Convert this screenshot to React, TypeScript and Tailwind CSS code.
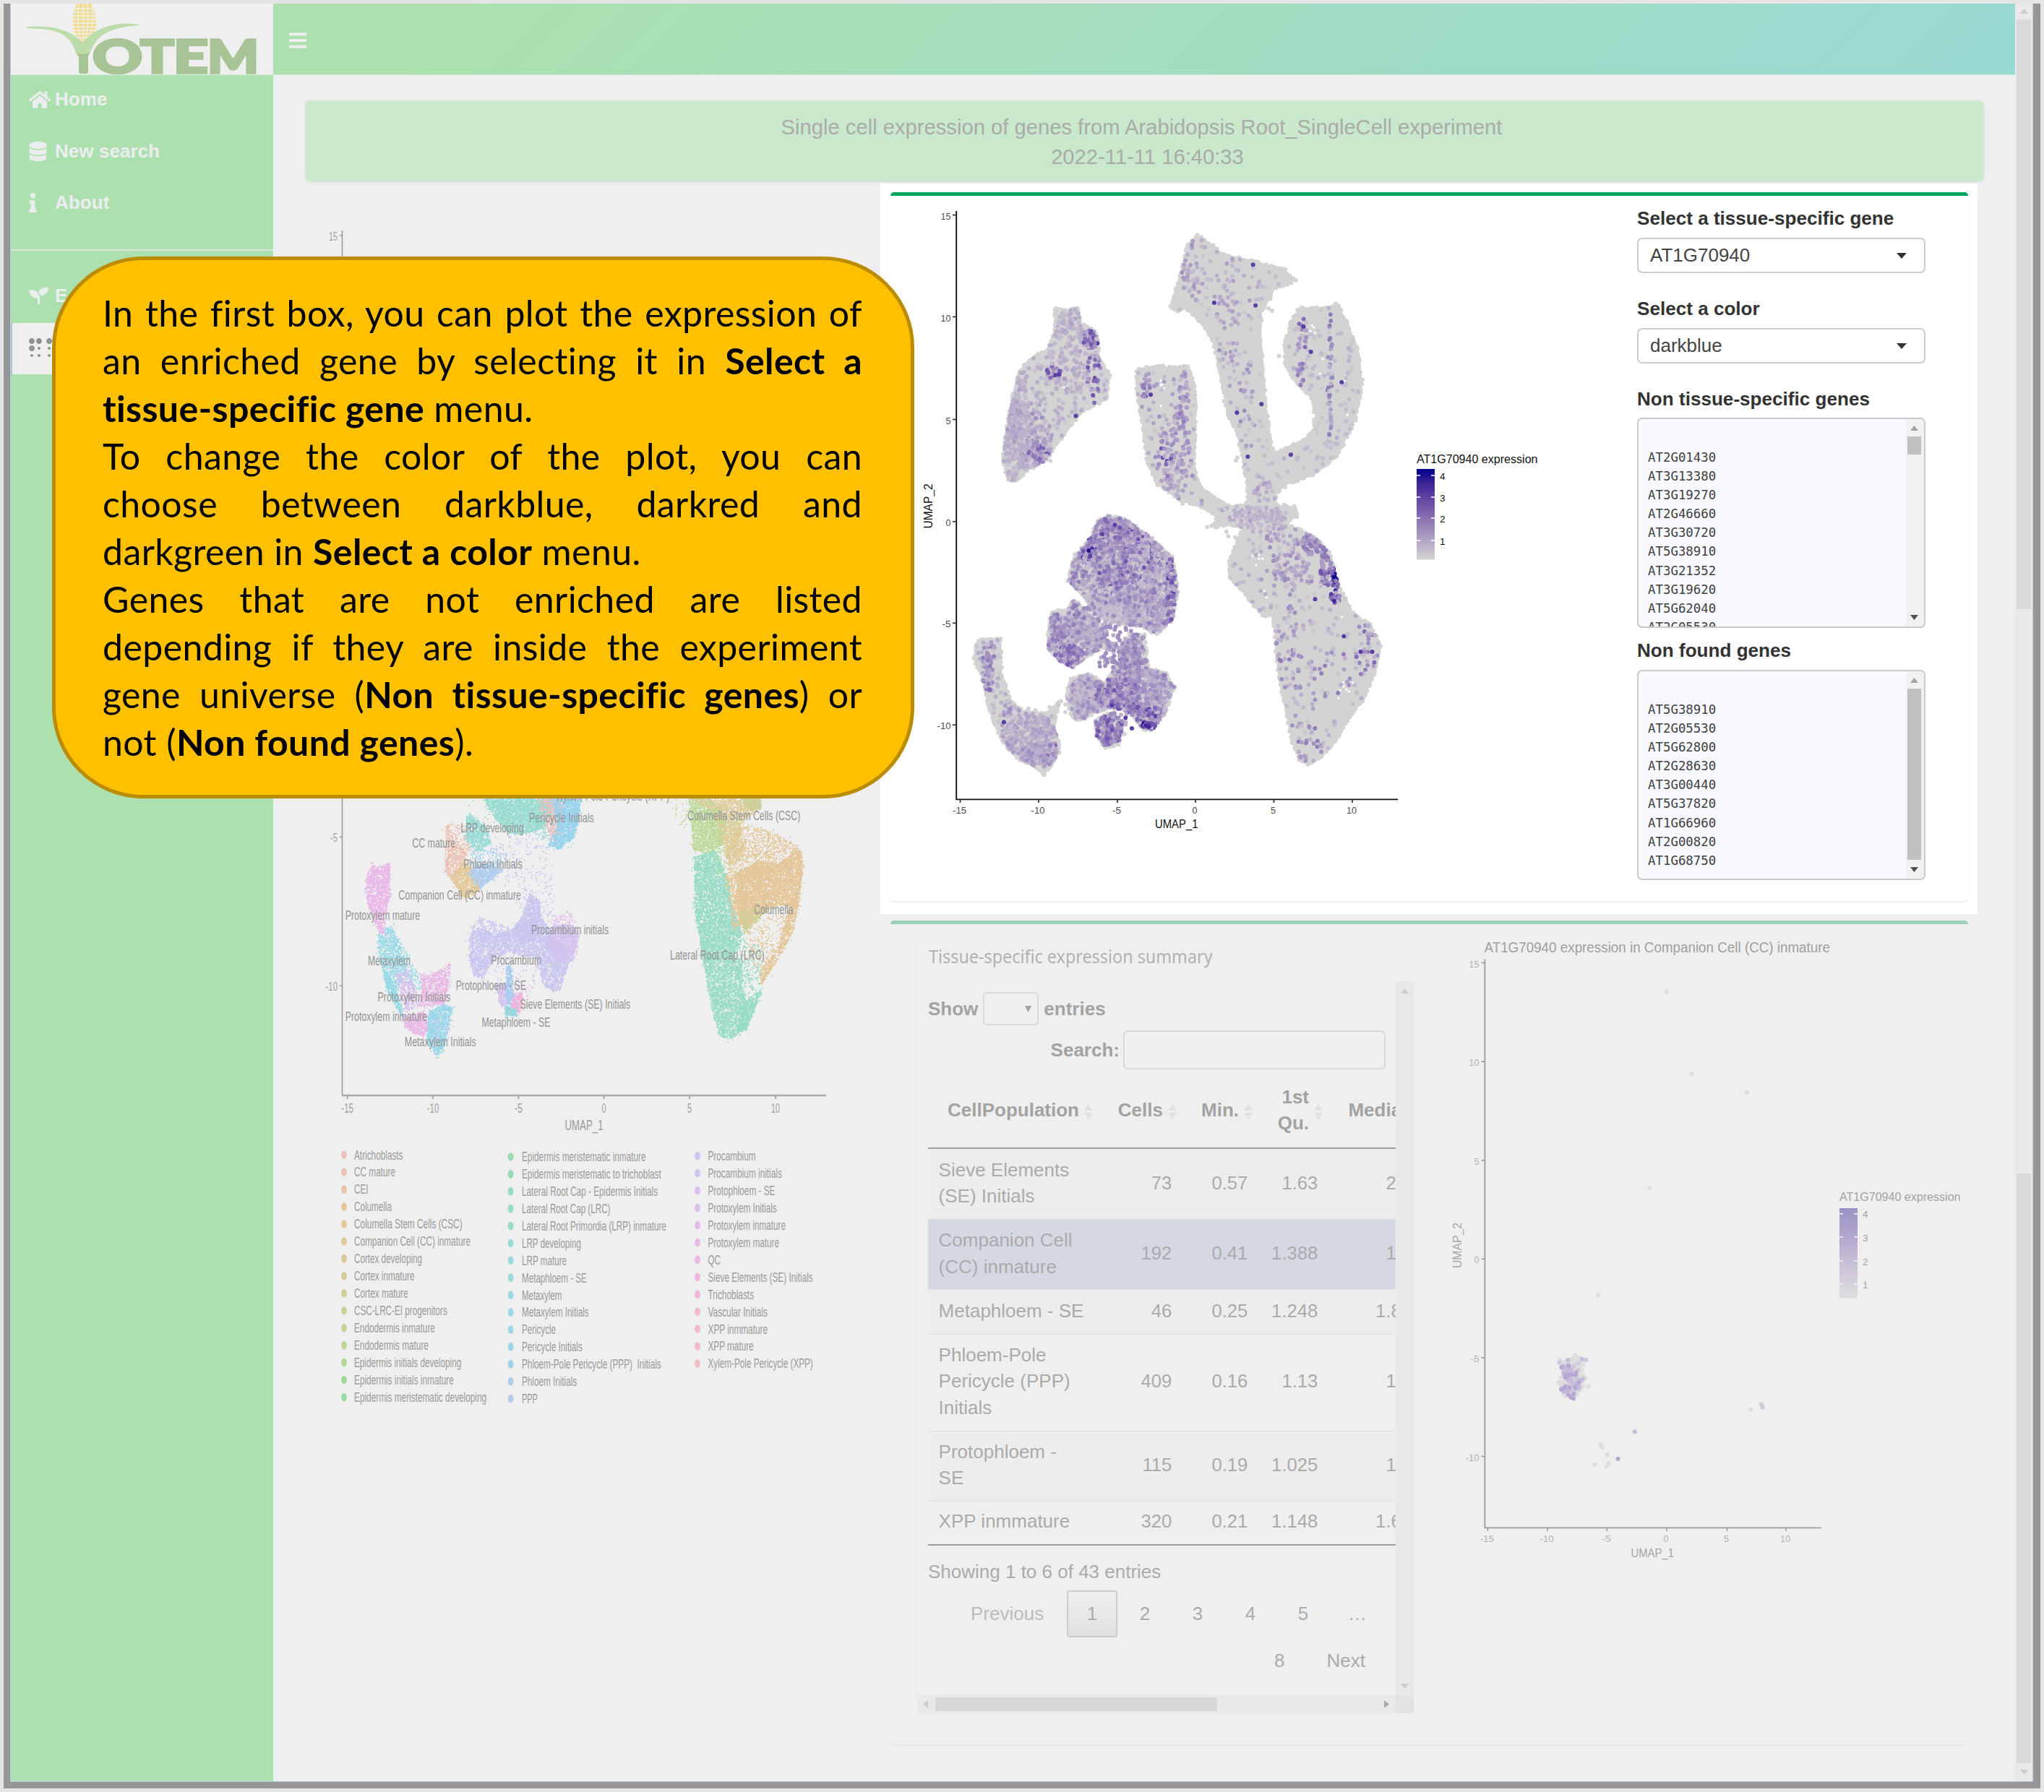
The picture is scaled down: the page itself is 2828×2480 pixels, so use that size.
import React from "react";
import { FaHome, FaDatabase, FaInfo, FaSeedling, FaBraille, FaBars } from "react-icons/fa";

type Pt = [number, number];

/* ---------- deterministic scatter helpers ---------- */

function rng(seed: number) {
  let s = seed >>> 0;
  return () => {
    s = (s + 0x6d2b79f5) >>> 0;
    let t = s;
    t = Math.imul(t ^ (t >>> 15), t | 1);
    t ^= t + Math.imul(t ^ (t >>> 7), t | 61);
    return ((t ^ (t >>> 14)) >>> 0) / 4294967296;
  };
}

function inside(p: Pt, poly: Pt[]) {
  let c = false;
  for (let i = 0, j = poly.length - 1; i < poly.length; j = i++) {
    const [xi, yi] = poly[i];
    const [xj, yj] = poly[j];
    if (yi > p[1] !== yj > p[1] && p[0] < ((xj - xi) * (p[1] - yi)) / (yj - yi) + xi) c = !c;
  }
  return c;
}

function samples(poly: Pt[], n: number, r: () => number): Pt[] {
  const xs = poly.map((p) => p[0]);
  const ys = poly.map((p) => p[1]);
  const x0 = Math.min(...xs), x1 = Math.max(...xs), y0 = Math.min(...ys), y1 = Math.max(...ys);
  const out: Pt[] = [];
  let guard = 0;
  while (out.length < n && guard++ < n * 30) {
    const p: Pt = [x0 + r() * (x1 - x0), y0 + r() * (y1 - y0)];
    if (inside(p, poly)) out.push(p);
  }
  return out;
}

const dots = (pts: Pt[]) => pts.map((p) => `M${p[0].toFixed(1)} ${p[1].toFixed(1)}h0`).join("");
const outline = (poly: Pt[]) => "M" + poly.map((p) => `${p[0].toFixed(1)} ${p[1].toFixed(1)}`).join("L") + "Z";

function edge(poly: Pt[], r: () => number): Pt[] {
  const out: Pt[] = [];
  poly.forEach((a, i) => {
    const b = poly[(i + 1) % poly.length];
    const n = Math.max(1, Math.round(Math.hypot(b[0] - a[0], b[1] - a[1]) / 3.4));
    for (let k = 0; k < n; k++) {
      const t = k / n;
      out.push([a[0] + (b[0] - a[0]) * t + (r() - 0.5) * 3, a[1] + (b[1] - a[1]) * t + (r() - 0.5) * 3]);
    }
  });
  return out;
}

/* ---------- expression plot data ---------- */

const up = (pts: Pt[]): Pt[] => pts.map(([x, y]) => [1200 + x / 2.063, 240 + y / 3]);
const low = (pts: Pt[]): Pt[] => pts.map(([x, y]) => [1200 + x / 2.063, 700 + y / 2.8]);

/* hot spot: centre x, centre y, radius x, radius y, dot count, expression level */
type Hot = [number, number, number, number, number, number];
type Blob = { poly: Pt[]; n: number; level: number; hot: Hot[] };

const blobs: Blob[] = [
  {
    poly: up([[538, 560], [570, 570], [600, 560], [608, 620], [655, 665], [660, 760], [692, 840], [680, 935], [610, 990], [555, 1090], [510, 1190], [465, 1225], [420, 1278], [405, 1270], [387, 1200], [400, 1050], [420, 900], [435, 820], [480, 755], [515, 735], [535, 670]]),
    n: 240, level: 0.14,
    hot: [[1395, 540, 22, 110, 430, 0.2], [1422, 600, 28, 40, 100, 0.28], [1405, 620, 24, 60, 130, 0.2], [1509, 468, 10, 12, 60, 0.52], [1513, 520, 8, 40, 24, 0.5], [1456, 515, 9, 7, 20, 0.55], [1438, 628, 13, 10, 60, 0.5], [1410, 620, 40, 50, 200, 0.22], [1480, 485, 25, 50, 150, 0.2]],
  },
  {
    poly: up([[770, 815], [830, 800], [880, 808], [915, 800], [930, 860], [937, 950], [930, 1220], [950, 1300], [1010, 1370], [1060, 1395], [1110, 1420], [1100, 1450], [1010, 1410], [960, 1385], [890, 1350], [830, 1290], [800, 1200], [790, 1070], [770, 900]]),
    n: 80, level: 0.2,
    hot: [[1586, 535, 7, 14, 16, 0.45], [1637, 560, 6, 40, 45, 0.36], [1622, 620, 20, 30, 50, 0.3], [1625, 665, 15, 25, 50, 0.28], [1614, 625, 8, 30, 10, 0.58]],
  },
  {
    poly: up([[940, 258], [975, 290], [1020, 340], [1100, 365], [1190, 400], [1220, 445], [1160, 480], [1140, 530], [1122, 580], [1122, 700], [1135, 950], [1150, 1120], [1160, 1165], [1200, 1140], [1240, 1115], [1275, 1070], [1280, 1000], [1270, 930], [1220, 860], [1195, 790], [1190, 720], [1215, 600], [1235, 560], [1300, 560], [1340, 545], [1375, 640], [1400, 740], [1412, 880], [1390, 1030], [1340, 1170], [1270, 1250], [1200, 1285], [1165, 1330], [1165, 1375], [1225, 1412], [1200, 1450], [1050, 1450], [1060, 1400], [1090, 1360], [1085, 1280], [1070, 1170], [1060, 1090], [1030, 1000], [1010, 830], [985, 680], [940, 600], [905, 550], [885, 575], [867, 550], [885, 470], [900, 400], [915, 300]]),
    n: 230, level: 0.1,
    hot: [[1650, 360, 14, 55, 50, 0.28], [1700, 380, 40, 50, 34, 0.26], [1702, 470, 14, 60, 28, 0.3], [1728, 560, 12, 60, 20, 0.3], [1801, 490, 7, 45, 30, 0.4], [1840, 510, 3, 80, 36, 0.38], [1745, 700, 16, 40, 40, 0.23]],
  },
  {
    poly: low([[955, 0], [1220, 5], [1225, 40], [1170, 60], [1190, 72], [1275, 118], [1320, 190], [1345, 310], [1380, 410], [1440, 470], [1463, 540], [1445, 650], [1420, 740], [1370, 830], [1330, 920], [1295, 975], [1255, 1000], [1235, 980], [1215, 920], [1200, 820], [1180, 690], [1168, 560], [1160, 415], [1130, 428], [1080, 340], [1035, 280], [1035, 210], [1060, 130], [1075, 90], [1040, 70], [985, 80], [1000, 45]]),
    n: 190, level: 0.13,
    hot: [[1740, 715, 35, 15, 80, 0.18], [1785, 755, 28, 38, 90, 0.3], [1822, 752, 16, 14, 80, 0.4], [1838, 780, 10, 26, 100, 0.48], [1848, 800, 4, 15, 40, 0.86], [1847, 826, 6, 7, 14, 0.62], [1790, 800, 40, 14, 30, 0.3], [1815, 930, 60, 30, 30, 0.38], [1890, 905, 14, 45, 28, 0.44], [1812, 1030, 14, 30, 22, 0.4], [1780, 890, 12, 60, 26, 0.32], [1800, 960, 20, 50, 14, 0.38]],
  },
  {
    poly: low([[690, 38], [740, 55], [800, 115], [870, 200], [885, 330], [870, 440], [825, 495], [790, 470], [760, 460], [700, 450], [660, 430], [610, 340], [575, 290], [590, 200], [640, 120], [660, 60]]),
    n: 1100, level: 0.25,
    hot: [[1530, 745, 40, 28, 320, 0.42], [1515, 752, 12, 12, 36, 0.66], [1500, 766, 8, 10, 20, 0.6], [1546, 796, 26, 16, 180, 0.46], [1580, 760, 22, 30, 50, 0.55], [1620, 815, 6, 40, 80, 0.54], [1555, 820, 40, 14, 90, 0.36], [1540, 735, 18, 16, 40, 0.58], [1525, 838, 24, 22, 220, 0.1], [1570, 790, 50, 45, 180, 0.12], [1590, 850, 30, 25, 160, 0.22]],
  },
  {
    poly: low([[525, 415], [575, 400], [590, 365], [640, 430], [670, 480], [680, 540], [620, 590], [585, 625], [550, 600], [515, 550]]),
    n: 340, level: 0.26,
    hot: [[1480, 908, 18, 12, 90, 0.46], [1463, 885, 10, 22, 60, 0.38], [1505, 870, 20, 22, 80, 0.26]],
  },
  {
    poly: low([[580, 670], [630, 655], [680, 690], [720, 600], [750, 500], [790, 500], [800, 630], [850, 650], [875, 700], [850, 800], [815, 865], [790, 865], [750, 800], [700, 780], [650, 800], [610, 830], [585, 820], [570, 740]]),
    n: 600, level: 0.24,
    hot: [[1560, 935, 14, 45, 200, 0.42], [1545, 962, 26, 20, 130, 0.46], [1572, 900, 6, 30, 60, 0.36], [1586, 990, 22, 14, 130, 0.54], [1590, 955, 22, 26, 130, 0.32], [1588, 1004, 10, 5, 24, 0.66], [1545, 978, 8, 5, 16, 0.66], [1497, 965, 14, 25, 100, 0.2]],
  },
  {
    poly: low([[650, 830], [700, 800], [730, 850], [715, 925], [680, 935], [655, 890]]),
    n: 90, level: 0.36,
    hot: [[1540, 1020, 14, 14, 40, 0.48]],
  },
  {
    poly: low([[325, 520], [345, 522], [378, 515], [382, 650], [410, 760], [450, 800], [490, 805], [520, 800], [550, 755], [530, 850], [548, 920], [545, 960], [505, 1040], [480, 1010], [430, 980], [385, 910], [350, 790], [335, 690], [305, 590], [312, 540]]),
    n: 90, level: 0.13,
    hot: [[1364, 900, 10, 20, 34, 0.34], [1367, 930, 7, 20, 26, 0.34], [1370, 952, 6, 6, 12, 0.5], [1425, 1020, 32, 28, 240, 0.24], [1440, 1045, 24, 14, 120, 0.28], [1456, 1045, 7, 14, 24, 0.46], [1392, 1020, 8, 20, 16, 0.46], [1405, 980, 16, 16, 30, 0.28]],
  },
];

const purples = ["#cbc7d1", "#c3bccf", "#b9afca", "#ad9fc6", "#a08fc1", "#927dbb", "#826ab4", "#7055ad", "#5b3ea5", "#43289c", "#271294", "#10048d"];

type Layer = { color: string; pts: Pt[] };

function expressionLayers(): { outlines: string[]; edges: string; layers: Layer[] } {
  const r = rng(11);
  const chunks: Layer[] = [];
  const edges: Pt[] = [];
  for (const b of blobs) {
    edges.push(...edge(b.poly, r));
    const all: { p: Pt; v: number }[] = [];
    samples(b.poly, b.n, r).forEach((p) => all.push({ p, v: b.level * (0.3 + r() * 1.5) }));
    for (const [cx, cy, rx, ry, n, lv] of b.hot) {
      for (let i = 0; i < n; i++) {
        const a = r() * Math.PI * 2;
        const d = Math.sqrt(r()) * 1.2;
        const p: Pt = [cx + Math.cos(a) * rx * d, cy + Math.sin(a) * ry * d];
        if (inside(p, b.poly)) all.push({ p, v: lv * (0.55 + r() * 0.75) });
      }
    }
    /* shuffled passes keep light and dark dots interleaved */
    for (let pass = 0; pass < 6; pass++) {
      const groups: Pt[][] = purples.map(() => []);
      all.forEach((d, i) => {
        if ((i * 7 + 3) % 6 === pass) groups[Math.max(0, Math.min(11, Math.floor(d.v * 12)))].push(d.p);
      });
      groups.forEach((g, i) => g.length && chunks.push({ color: purples[i], pts: g }));
    }
  }
  return { outlines: blobs.map((b) => outline(b.poly)), edges: dots(edges), layers: chunks };
}

const expr = expressionLayers();

const strays: Pt[] = (() => {
  const r = rng(77);
  return [
    ...samples(low([[680, 470], [760, 450], [760, 560], [700, 640], [650, 620], [670, 560]]), 90, r),
    ...samples(low([[590, 370], [640, 370], [700, 470], [680, 500]]), 24, r),
    ...samples(low([[690, 800], [740, 800], [740, 860], [710, 860]]), 12, r),
  ];
})();

const greyStrays: Pt[] = [
  ...low([[545, 765], [565, 770], [565, 800], [520, 780], [480, 792], [460, 785], [735, 885], [1025, 100], [1030, 118], [1050, 122], [970, 82], [1000, 60], [1215, 30], [1220, 15]]),
  ...up([[1175, 758], [1155, 570], [1145, 560], [1150, 520], [1018, 945], [1052, 1192], [1056, 1180], [1275, 990], [523, 1193], [990, 1345], [992, 1380], [900, 1372], [1215, 1408], [1190, 1375], [1180, 1390], [1085, 1320]]),
];

/* single strongly expressed cells */
const strong: Pt[] = [
  ...low([[390, 838], [755, 862], [737, 822], [1278, 362], [1441, 566], [1408, 566], [1360, 505]]),
  ...up([[1055, 993], [1125, 958], [1086, 1176], [1209, 1168], [1245, 636], [1266, 741], [1354, 867], [595, 1007], [809, 919], [1108, 548], [990, 537], [1101, 379]]),
];

/* small gaps in the dense clouds */
const gaps: Pt[] = [
  ...up([[1270, 632], [1275, 640], [1265, 655], [1278, 662], [838, 860], [842, 875], [846, 893], [838, 880], [838, 965], [560, 880], [563, 890], [555, 885], [1300, 770], [1292, 830], [1370, 1003], [1362, 860]]),
  ...low([[1103, 170], [1100, 195], [1118, 190], [1118, 205], [1110, 230], [1128, 205], [1262, 152], [1285, 165], [1358, 685], [1350, 715], [1368, 712], [1345, 745], [1386, 685], [1375, 720], [1360, 700], [400, 880], [405, 890], [412, 900], [1140, 355], [1133, 330], [1355, 430]]),
];

/* ---------- cell type plot data ---------- */

const cm = (pts: Pt[]): Pt[] => pts.map(([x, y]) => [440 + x / 2.119, 1080 + y / 3]);

const cellClouds: [string, number, Pt[]][] = [
  ["#98dcd0", 4200, [[485, 75], [690, 75], [680, 150], [660, 200], [600, 222], [560, 220], [520, 160]]],
  ["#98dcd0", 300, [[600, 100], [700, 100], [690, 240], [640, 240]]],
  ["#eebfc4", 1000, [[645, 75], [720, 75], [715, 150], [700, 270], [665, 190]]],
  ["#98d3ee", 2600, [[690, 75], [770, 75], [765, 160], [750, 240], [705, 285], [675, 270], [700, 190]]],
  ["#98dbd5", 1100, [[435, 150], [445, 140], [490, 190], [510, 260], [470, 300], [430, 250]]],
  ["#98dbd5", 60, [[440, 80], [480, 100], [560, 330], [440, 330]]],
  ["#ecc1b4", 900, [[374, 190], [385, 180], [400, 260], [440, 300], [400, 430], [372, 380]]],
  ["#ecc1b4", 160, [[385, 180], [430, 190], [450, 300], [410, 290]]],
  ["#e4c998", 1300, [[390, 400], [430, 330], [470, 400], [475, 450], [440, 490], [418, 480]]],
  ["#b0cdf0", 1200, [[440, 380], [480, 345], [545, 370], [500, 420], [475, 450], [450, 410]]],
  ["#a9d3ee", 260, [[450, 290], [540, 280], [540, 370], [450, 370]]],
  ["#c9c6ef", 440, [[510, 290], [600, 180], [680, 240], [690, 560], [600, 560], [545, 440], [560, 340]]],
  ["#c9c6ef", 1900, [[600, 560], [622, 470], [650, 500], [655, 640], [600, 680], [570, 620]]],
  ["#c9c6ef", 6500, [[443, 650], [470, 610], [520, 640], [600, 600], [650, 560], [700, 650], [740, 740], [710, 870], [690, 878], [660, 850], [640, 740], [560, 720], [520, 740], [480, 820], [455, 810], [441, 720]]],
  ["#c9c6ef", 420, [[445, 600], [480, 570], [560, 610], [560, 680], [450, 660]]],
  ["#d3c3ee", 2400, [[690, 600], [750, 600], [765, 650], [745, 750], [700, 760], [670, 680]]],
  ["#e4bfe9", 120, [[660, 570], [740, 540], [760, 600], [700, 610]]],
  ["#c9c6ef", 90, [[505, 750], [650, 750], [650, 850], [540, 860]]],
  ["#a4cdee", 600, [[552, 770], [565, 770], [572, 860], [578, 930], [550, 930]]],
  ["#d3c3ee", 420, [[520, 850], [550, 850], [552, 940], [535, 930]]],
  ["#eeb5dd", 520, [[568, 900], [595, 880], [600, 900], [592, 965], [568, 955]]],
  ["#98d7de", 420, [[548, 935], [585, 955], [580, 975], [550, 978]]],
  ["#eeb5dd", 60, [[570, 850], [630, 860], [600, 960], [580, 940]]],
  ["#e9b8e9", 2200, [[145, 380], [160, 350], [180, 360], [210, 342], [212, 480], [195, 560], [200, 650], [175, 620], [150, 540], [138, 450]]],
  ["#98dae6", 1300, [[172, 640], [215, 600], [240, 690], [262, 790], [240, 850], [225, 900], [195, 820], [180, 740]]],
  ["#98dae6", 400, [[205, 640], [212, 600], [300, 810], [305, 870], [260, 860]]],
  ["#98dae6", 700, [[190, 780], [215, 830], [250, 960], [250, 990], [225, 930], [200, 860]]],
  ["#d9bfee", 600, [[225, 800], [265, 780], [300, 930], [260, 960]]],
  ["#e9b8e5", 1300, [[300, 805], [330, 805], [370, 780], [390, 755], [380, 900], [370, 930], [290, 940], [305, 880]]],
  ["#e9b8e5", 900, [[250, 980], [310, 960], [330, 1030], [310, 1060], [280, 1050], [252, 1020]]],
  ["#98d7e9", 1700, [[325, 960], [370, 930], [395, 945], [380, 1040], [370, 1110], [350, 1147], [318, 1080]]],
  ["#e9b8e5", 60, [[330, 930], [400, 1000], [400, 1080], [340, 1080]]],
  ["#bcd998", 2600, [[1088, 75], [1150, 75], [1200, 170], [1190, 260], [1150, 310], [1100, 290]]],
  ["#bcd998", 600, [[1140, 75], [1240, 130], [1230, 350], [1180, 420], [1150, 300]]],
  ["#bcd998", 50, [[1025, 75], [1090, 75], [1090, 180], [1055, 190]]],
  ["#dfca98", 2200, [[1088, 75], [1290, 75], [1300, 110], [1240, 180], [1250, 330], [1200, 350], [1160, 130]]],
  ["#ccd098", 500, [[1240, 75], [1298, 75], [1300, 120], [1260, 120]]],
  ["#98dcc6", 7000, [[1103, 320], [1165, 290], [1205, 420], [1215, 520], [1245, 640], [1220, 740], [1160, 740], [1130, 760], [1105, 540]]],
  ["#98dcc6", 4200, [[1128, 740], [1240, 740], [1245, 860], [1260, 960], [1260, 1030], [1205, 1078], [1178, 1060], [1155, 960]]],
  ["#98dcc6", 800, [[1250, 920], [1305, 860], [1262, 1015], [1225, 1050]]],
  ["#98dcc6", 350, [[1230, 640], [1300, 700], [1300, 860], [1240, 900]]],
  ["#e4c698", 6800, [[1235, 380], [1290, 335], [1350, 350], [1400, 290], [1415, 290], [1424, 360], [1408, 520], [1340, 520], [1290, 570], [1250, 620], [1225, 500]]],
  ["#e4c698", 1900, [[1190, 200], [1290, 190], [1410, 270], [1415, 330], [1340, 400], [1210, 420]]],
  ["#e4c698", 900, [[1190, 400], [1240, 380], [1270, 600], [1220, 620]]],
  ["#e4c698", 1100, [[1385, 500], [1410, 500], [1395, 620], [1350, 740], [1300, 850], [1295, 800], [1350, 690]]],
  ["#e4c698", 420, [[1260, 590], [1380, 540], [1380, 640], [1300, 820], [1260, 720]]],
  ["#ccd098", 600, [[1230, 540], [1320, 530], [1290, 580], [1250, 640]]],
];

/* part of each cloud is jittered so that neighbouring clouds blend */
function cloud(poly: Pt[], n: number, r: () => number): Pt[] {
  return samples(poly, n, r).map(([x, y], i) => {
    if (i % 3 !== 0) return [x, y] as Pt;
    const a = r() * Math.PI * 2;
    const d = r() * r() * 13;
    return [x + Math.cos(a) * d * 0.6, y + Math.sin(a) * d] as Pt;
  });
}

const cloudPaths = cellClouds
  .map(([color, n, poly], i) => {
    const pts = cloud(cm(poly), Math.round(n * 0.6), rng(100 + i)).filter((p) => p[1] > 1085);
    return [0, 1].map((k) => ({ color, k, d: dots(pts.filter((_, j) => j % 2 === k)) }));
  })
  .flat()
  .sort((a, b) => a.k - b.k);

/* label, left, right, baseline */
const cellLabels: [string, number, number, number][] = [
  ["Xylem-Pole Pericycle (XPP)", 700, 1030, 85],
  ["Pericycle Initials", 619, 809, 174],
  ["LRP developing", 418, 603, 215],
  ["CC mature", 276, 403, 279],
  ["Columella Stem Cells (CSC)", 1083, 1414, 164],
  ["Phloem Initials", 426, 599, 366],
  ["Companion Cell (CC) inmature", 236, 595, 494],
  ["Protoxylem mature", 80, 299, 580],
  ["Procambium initials", 625, 852, 640],
  ["Columella", 1278, 1393, 556],
  ["Lateral Root Cap (LRC)", 1032, 1309, 745],
  ["Metaxylem", 146, 271, 769],
  ["Procambium", 507, 655, 765],
  ["Protophloem - SE", 404, 610, 869],
  ["Sieve Elements (SE) Initials", 592, 916, 947],
  ["Protoxylem Initials", 175, 388, 919],
  ["Protoxylem inmature", 80, 320, 998],
  ["Metaphloem - SE", 480, 681, 1024],
  ["Metaxylem Initials", 254, 463, 1103],
];

type LegendItem = [string, number, string];
const legend: { dotX: number; textX: number; y: number; step: number; items: LegendItem[] }[] = [
  {
    dotX: 476, textX: 490, y: 1604.5, step: 23.95,
    items: [["Atrichoblasts", 249, "#eec1bd"], ["CC mature", 227, "#edc2b7"], ["CEI", 147, "#eac3a8"], ["Columella", 216, "#e7c59a"], ["Columella Stem Cells (CSC)", 423, "#e4c798"], ["Companion Cell (CC) inmature", 447, "#e0c998"], ["Cortex developing", 305, "#dccb98"], ["Cortex inmature", 283, "#d7cd98"], ["Cortex mature", 264, "#d2cf98"], ["CSC-LRC-EI progenitors", 379, "#ccd198"], ["Endodermis inmature", 343, "#c6d398"], ["Endodermis mature", 324, "#bed698"], ["Epidermis initials developing", 420, "#b3d798"], ["Epidermis initials inmature", 398, "#a3d998"], ["Epidermis meristematic developing", 494, "#98daa4"]],
  },
  {
    dotX: 706.6, textX: 722, y: 1607.3, step: 23.9,
    items: [["Epidermis meristematic inmature", 961, "#98dbb0"], ["Epidermis meristematic to trichoblast", 1006, "#98dbb8"], ["Lateral Root Cap - Epidermis Initials", 996, "#98dcc0"], ["Lateral Root Cap (LRC)", 857, "#98dcc7"], ["Lateral Root Primordia (LRP) inmature", 1021, "#98dccd"], ["LRP developing", 771, "#98dbd3"], ["LRP mature", 729, "#98dbd8"], ["Metaphloem - SE", 788, "#98dadd"], ["Metaxylem", 715, "#98d9e2"], ["Metaxylem Initials", 794, "#98d8e7"], ["Pericycle", 697, "#98d6ea"], ["Pericycle Initials", 775, "#98d4ed"], ["Phloem-Pole Pericycle (PPP)  Initials", 1006, "#98d2ef"], ["Phloem Initials", 759, "#abcef0"], ["PPP", 644, "#bccaf0"]],
  },
  {
    dotX: 965, textX: 979.5, y: 1606, step: 23.95,
    items: [["Procambium", 1283, "#c9c7f0"], ["Procambium initials", 1360, "#d1c4ef"], ["Protophloem - SE", 1340, "#d9c1ef"], ["Protoxylem Initials", 1345, "#dfbeed"], ["Protoxylem inmature", 1371, "#e5bbeb"], ["Protoxylem mature", 1352, "#e9b9e8"], ["QC", 1180, "#ecb8e4"], ["Sieve Elements (SE) Initials", 1451, "#eeb7df"], ["Trichoblasts", 1278, "#efb8da"], ["Vascular Initials", 1318, "#efb9d4"], ["XPP inmmature", 1318, "#efbacd"], ["XPP mature", 1277, "#efbcc7"], ["Xylem-Pole Pericycle (XPP)", 1451, "#eebfc2"]],
  },
];

/* ---------- shared pieces ---------- */

function T({ x, y, w, size, fill, children }: { x: number; y: number; w?: number; size: number; fill: string; children: string }) {
  return (
    <text x={x} y={y} fontSize={size} fill={fill} textLength={w} lengthAdjust="spacingAndGlyphs" style={{ whiteSpace: "pre" }}>
      {children}
    </text>
  );
}

function Tri({ dir, color, w = 14, h = 8 }: { dir: "up" | "down" | "left" | "right"; color: string; w?: number; h?: number }) {
  const d = { up: `M0 ${h}L${w / 2} 0L${w} ${h}Z`, down: `M0 0H${w}L${w / 2} ${h}Z`, left: `M${w} 0V${h}L0 ${h / 2}Z`, right: `M0 0V${h}L${w} ${h / 2}Z` }[dir];
  return (
    <svg width={w} height={h} viewBox={`0 0 ${w} ${h}`} className="block shrink-0">
      <path d={d} fill={color} />
    </svg>
  );
}

const yTicks = ["15", "10", "5", "0", "-5", "-10"];
const xTicks = ["-15", "-10", "-5", "0", "5", "10"];

function Logo() {
  return (
    <svg viewBox="15 5 363 98" className="block h-[98px] w-[363px] overflow-visible">
      <path d="M106 5H127Q133 20 133 32Q132 48 115 62Q101 48 101 32Q101 18 106 5Z" fill="#f1dc8b" />
      <g stroke="#efefef" strokeWidth="1.3" fill="none">
        <path d="M109 5Q105 32 112 60M115 5V62M121 5Q123 30 118 62M127 5Q131 34 122 58" />
        <path d="M98 12H136M98 17H136M98 22H136M98 27H136M98 32H136M98 37H136M98 42H136M98 47H136M98 52H136" />
      </g>
      <path d="M37 37.5C66 34 92 40 106 52C110 56 113 58 115 58C122 50 136 38 160 34C174 31 186 33 194 35C172 36 152 41 140 50C128 59 127 72 121 78H107C103 68 101 58 90 50C78 41 58 39.5 37 39Z" fill="#bcdcaa" />
      <path d="M107 73Q115 77 124 73L122 78V99Q122 102 119 102H112Q109 102 109 99V78Z" fill="#a8c497" />
      <g fill="#a8c497" stroke="#a8c497" strokeWidth="3.4" fontFamily="Lato, sans-serif" fontWeight="900" fontSize="62">
        <text x="128" y="100.5" textLength="69" lengthAdjust="spacingAndGlyphs">O</text>
        <text x="194" y="100.5" textLength="47" lengthAdjust="spacingAndGlyphs">T</text>
        <text x="240" y="100.5" textLength="48" lengthAdjust="spacingAndGlyphs">E</text>
        <text x="287" y="100.5" textLength="71" lengthAdjust="spacingAndGlyphs">M</text>
      </g>
    </svg>
  );
}

function MenuItem({ icon, label }: { icon: React.ReactNode; label: string }) {
  return (
    <div className="flex h-[71.4px] items-center pl-[25px] text-[26.1px] font-bold text-[#ecedef]">
      <span className="flex w-[36px]">{icon}</span>
      {label}
    </div>
  );
}

function Sidebar() {
  return (
    <aside className="w-[363px] shrink-0 bg-[#ace1af]">
      <div className="h-[99px] border-b border-[#d9ead9] bg-[#efefef]">
        <Logo />
      </div>
      <div className="-mt-[2px]">
        <MenuItem icon={<FaHome className="h-[28px] w-[30px]" />} label="Home" />
        <MenuItem icon={<FaDatabase className="h-[27px] w-[25px]" />} label="New search" />
        <MenuItem icon={<FaInfo className="h-[27px] w-[11px]" />} label="About" />
      </div>
      <div className="mt-[29px] h-[2px] bg-[#dbeadb]" />
      <div className="mt-[27px]">
        <MenuItem icon={<FaSeedling className="h-[27px] w-[27px]" />} label="E" />
      </div>
      <div className="mt-[1px] flex h-[71px] items-center border-l-2 border-[#a9c7d8] bg-[#efefef] pl-[23px]">
        <FaBraille className="h-[34px] w-[40px] text-[#8f9295]" />
      </div>
    </aside>
  );
}

function CellTypePlot() {
  const c = "#a0a0a0";
  const xs = [480.6, 599, 717.3, 835.5, 954, 1073];
  const ys: [string, number, number][] = [["15", 326, 12], ["-5", 1158.3, 10], ["-10", 1364.3, 16.5]];
  return (
    <svg viewBox="378 254 840 1750" className="block h-[1750px] w-[840px]" fontFamily="'Liberation Sans', sans-serif">
      {cloudPaths.map((p, i) => (
        <path key={i} d={p.d} stroke={p.color} strokeWidth="2" strokeLinecap="round" fill="none" />
      ))}
      <path d="M473.5 319V1516" stroke="#9b9b9b" strokeWidth="1.6" />
      <path d="M473 1516H1143" stroke="#aaaaaa" strokeWidth="2.6" />
      {ys.map(([t, y, w]) => (
        <g key={t}>
          <path d={`M470 ${y}H473`} stroke="#9b9b9b" strokeWidth="1.6" />
          <T x={467 - w} y={y + 7} w={w} size={17} fill={c}>{t}</T>
        </g>
      ))}
      {xs.map((x, i) => (
        <g key={i}>
          <path d={`M${x} 1517V1521`} stroke="#9b9b9b" strokeWidth="1.6" />
          <T x={x - [16.5, 16.5, 11, 6, 6, 12][i] / 2} y={1540.2} w={[16.5, 16.5, 11, 6, 6, 12][i]} size={17.5} fill={c}>{xTicks[i]}</T>
        </g>
      ))}
      <T x={781.5} y={1563.5} w={53} size={20} fill="#9a9a9a">UMAP_1</T>
      {cellLabels.map(([t, a, b, y]) => (
        <T key={t} x={440 + a / 2.119} y={1080 + y / 3} w={(b - a) / 2.119} size={19} fill="#949494">{t}</T>
      ))}
      {legend.map((col, k) =>
        col.items.map(([t, right, color], i) => (
          <g key={k + "-" + i}>
            <ellipse cx={col.dotX} cy={col.y - 6.3 + i * col.step} rx="3.9" ry="5.8" fill={color} />
            <T x={col.textX} y={col.y + i * col.step} w={440 + right / 2.119 - col.textX} size={17.5} fill="#9a9a9a">{t}</T>
          </g>
        )),
      )}
    </svg>
  );
}

function ColorBar({ id, x, y, h, ticks, stops, title, titleY, ink, tickInk }: { id: string; x: number; y: number; h: number; ticks: number[]; stops: string[]; title: string; titleY: number; ink: string; tickInk: string }) {
  return (
    <g>
      <defs>
        <linearGradient id={id} x1="0" y1="0" x2="0" y2="1">
          {stops.map((s, i) => (
            <stop key={i} offset={i / (stops.length - 1)} stopColor={s} />
          ))}
        </linearGradient>
      </defs>
      <T x={x} y={titleY} w={167.5} size={16} fill={ink}>{title}</T>
      <rect x={x} y={y} width="25" height={h} fill={`url(#${id})`} />
      {ticks.map((t, i) => (
        <g key={i}>
          <path d={`M${x} ${t}h5M${x + 20} ${t}h5`} stroke={tickInk} strokeWidth="1.6" />
          <T x={x + 32} y={t + 5.5} size={13.5} fill={ink}>{String(4 - i)}</T>
        </g>
      ))}
    </g>
  );
}

function ExpressionPlot() {
  const xs = [1328.5, 1437, 1546, 1654, 1762.5, 1871];
  const ys = [297.5, 438.5, 580.5, 721.8, 862.3, 1003.2];
  return (
    <svg viewBox="1232 271 1033 976" className="block h-[976px] w-[1033px] shrink-0" fontFamily="'Liberation Sans', sans-serif">
      {expr.outlines.map((d, i) => (
        <path key={i} d={d} fill="#d3d3d3" />
      ))}
      <path d={expr.edges + dots(greyStrays)} stroke="#d3d3d3" strokeWidth="5.8" strokeLinecap="round" />
      <path d={dots(gaps)} stroke="#ffffff" strokeWidth="3.4" strokeLinecap="round" />
      {expr.layers.map((l, i) => (
        <path key={i} d={dots(l.pts)} stroke={l.color} strokeWidth="5.8" strokeLinecap="round" />
      ))}
      <path d={dots(strays.filter((_, i) => i % 2 === 0))} stroke="#b9afca" strokeWidth="5.8" strokeLinecap="round" />
      <path d={dots(strays.filter((_, i) => i % 2 === 1))} stroke="#9f8fc0" strokeWidth="5.8" strokeLinecap="round" />
      <path d={dots(strong)} stroke="#5b3ea5" strokeWidth="6" strokeLinecap="round" />
      <path d="M1323.2 292V1106.4H1934" stroke="#111" strokeWidth="1.9" fill="none" />
      {ys.map((y, i) => (
        <g key={i}>
          <path d={`M1318 ${y}h5`} stroke="#333" strokeWidth="1.7" />
          <T x={1315.5 - [14, 14, 7, 7, 12, 19][i]} y={y + 6} w={[14, 14, 7, 7, 12, 19][i]} size={13.4} fill="#4d4d4d">{yTicks[i]}</T>
        </g>
      ))}
      {xs.map((x, i) => (
        <g key={i}>
          <path d={`M${x} 1107v4`} stroke="#333" strokeWidth="1.7" />
          <T x={x - 1 - [19, 19, 12, 7, 7, 14][i] / 2} y={1126} w={[19, 19, 12, 7, 7, 14][i]} size={13.4} fill="#4d4d4d">{xTicks[i]}</T>
        </g>
      ))}
      <T x={1598} y={1146} w={59.5} size={16} fill="#111">UMAP_1</T>
      <g transform="translate(1290 731.5) rotate(-90)">
        <T x={0} y={0} w={62} size={16} fill="#111">UMAP_2</T>
      </g>
      <ColorBar id="bar-main" x={1960} y={649} h={125.5} ticks={[658, 688, 717, 748]} titleY={640.8} title="AT1G70940 expression" ink="#111" tickInk="#fff" stops={["#00008b", "#412797", "#6446a3", "#8368b0", "#9f8cbc", "#bab0c8", "#d3d3d3"]} />
    </svg>
  );
}

function CompanionPlot() {
  const c = "#a6a6a6";
  const xs = [2058.4, 2141.2, 2223.4, 2306.1, 2389.4, 2471];
  const ys = [1332.5, 1469.2, 1606, 1742.3, 1879, 2015.5];
  const a = (p: Pt[]): Pt[] => p.map(([x, y]) => [1980 + x / 1.849, 1270 + y / 2.45]);
  const b = (p: Pt[]): Pt[] => p.map(([x, y]) => [1980 + x / 1.849, 1850 + y / 2.489]);
  const r = rng(5);
  const cluster = b([[328, 78], [345, 85], [368, 68], [398, 80], [385, 110], [398, 135], [388, 180], [365, 215], [340, 205], [324, 160], [335, 130], [330, 100]]);
  const core = b([[332, 100], [350, 95], [375, 100], [382, 150], [380, 190], [360, 210], [340, 195], [333, 180], [345, 150]]);
  return (
    <svg viewBox="1956 1279 766 1135" className="block h-[1135px] w-[766px] shrink-0" fontFamily="'Liberation Sans', sans-serif">
      <T x={2053.5} y={1317.8} w={478.5} size={20} fill="#a0a0a0">AT1G70940 expression in Companion Cell (CC) inmature</T>
      <path d="M2054.4 1327.5V2114.4H2519.7" stroke="#9c9c9c" strokeWidth="1.8" fill="none" />
      {ys.map((y, i) => (
        <g key={i}>
          <path d={`M2049.5 ${y}h5`} stroke="#9c9c9c" strokeWidth="1.6" />
          <T x={2046.5 - [14, 14, 7, 7, 12, 19][i]} y={y + 6} w={[14, 14, 7, 7, 12, 19][i]} size={13.4} fill="#b2b2b2">{yTicks[i]}</T>
        </g>
      ))}
      {xs.map((x, i) => (
        <g key={i}>
          <path d={`M${x} 2115v4`} stroke="#9c9c9c" strokeWidth="1.6" />
          <T x={x - 1 - [19, 19, 12, 7, 7, 14][i] / 2} y={2133.6} w={[19, 19, 12, 7, 7, 14][i]} size={13.4} fill="#b2b2b2">{xTicks[i]}</T>
        </g>
      ))}
      <T x={2256.5} y={2154.5} w={59.5} size={16} fill={c}>UMAP_1</T>
      <g transform="translate(2022 1755) rotate(-90)">
        <T x={0} y={0} w={63} size={16} fill={c}>UMAP_2</T>
      </g>
      <path
        d={dots([...samples(cluster, 170, r), ...b([[368, 62], [403, 172], [818, 251], [843, 230], [433, 376], [438, 381], [435, 371], [451, 407], [419, 440], [454, 436], [449, 447]]), ...a([[602, 251], [667, 529], [807, 593], [559, 917], [427, 1280]])])}
        stroke="#dedede" strokeWidth="6" strokeLinecap="round"
      />
      <path d={dots([...samples(core, 40, r), ...b([[846, 235], [848, 243], [396, 80], [328, 88], [376, 92]])])} stroke="#cec8dd" strokeWidth="6" strokeLinecap="round" />
      <path d={dots([...samples(core, 34, r), ...b([[521, 327], [386, 77], [388, 145], [350, 80]])])} stroke="#c3b9da" strokeWidth="6" strokeLinecap="round" />
      <path d={dots([...samples(core, 10, r), ...b([[478, 421], [334, 106], [352, 100], [345, 130], [350, 133], [360, 131], [370, 131], [333, 182], [358, 209], [364, 212]])])} stroke="#b5a8d3" strokeWidth="6" strokeLinecap="round" />
      <ColorBar id="bar-faded" x={2545} y={1672} h={124.5} ticks={[1679.8, 1712, 1745, 1777]} titleY={1661.8} title="AT1G70940 expression" ink="#a3a3a3" tickInk="#f4f4f4" stops={["#9894c6", "#a79dc9", "#b3a8ce", "#c0b6d3", "#cbc4d8", "#d6d1dc", "#dedede"]} />
    </svg>
  );
}

function SelectBox({ value }: { value: string }) {
  return (
    <div className="mt-2 flex h-[49px] items-center justify-between rounded-[7px] border-2 border-[#cccccc] bg-white pr-[24px] pl-[16px] text-[26px] text-[#444]">
      <span>{value}</span>
      <Tri dir="down" color="#333" />
    </div>
  );
}

function GeneList({ genes, thumb }: { genes: string[]; thumb: string }) {
  return (
    <div className="flex h-[291px] overflow-hidden rounded-[7px] border-2 border-[#cacaca] bg-[#f8f9ff]">
      <pre className="flex-1 pt-[40px] pl-[13px] font-['DejaVu_Sans_Mono',monospace] text-[17.4px] leading-[26.1px] text-[#404040]">{genes.join("\n")}</pre>
      <div className="flex w-[25px] flex-col items-center bg-[#f1f1f1] pt-[9px] pr-[2px] pb-[9px]">
        <Tri dir="up" color="#a3a3a3" w={11} h={7} />
        <div className={"mt-[8px] w-[19px] bg-[#c1c1c1] " + thumb} />
        <div className="mt-auto">
          <Tri dir="down" color="#505050" w={11} h={7} />
        </div>
      </div>
    </div>
  );
}

function Controls() {
  const label = "block text-[26.1px] leading-[37px] font-bold text-[#333] whitespace-nowrap";
  return (
    <div className="w-[399px] shrink-0 pt-[13px]">
      <label className={label}>Select a tissue-specific gene</label>
      <SelectBox value="AT1G70940" />
      <label className={label + " mt-[31px]"}>Select a color</label>
      <SelectBox value="darkblue" />
      <label className={label + " mt-[31px]"}>Non tissue-specific genes</label>
      <div className="mt-[7px]">
        <GeneList thumb="h-[25px]" genes={["AT2G01430", "AT3G13380", "AT3G19270", "AT2G46660", "AT3G30720", "AT5G38910", "AT3G21352", "AT3G19620", "AT5G62040", "AT2G05530"]} />
      </div>
      <label className={label + " mt-[13px]"}>Non found genes</label>
      <div className="mt-[8px]">
        <GeneList thumb="h-[237px]" genes={["AT5G38910", "AT2G05530", "AT5G62800", "AT2G28630", "AT3G00440", "AT5G37820", "AT1G66960", "AT2G00820", "AT1G68750"]} />
      </div>
    </div>
  );
}

function Sort() {
  return (
    <span className="mt-[5px] flex flex-col gap-[3px]">
      <Tri dir="up" color="#e1e1e1" w={12} h={9} />
      <Tri dir="down" color="#e1e1e1" w={12} h={9} />
    </span>
  );
}

type Row = { name: string[]; vals: string[]; cls: string };
const rows: Row[] = [
  { name: ["Sieve Elements", "(SE) Initials"], vals: ["73", "0.57", "1.63", "2.21"], cls: "h-[97px] bg-[#ededed]" },
  { name: ["Companion Cell", "(CC) inmature"], vals: ["192", "0.41", "1.388", "1.92"], cls: "h-[97px] bg-[#d4d8e2] border-t border-[#dcdde0]" },
  { name: ["Metaphloem - SE"], vals: ["46", "0.25", "1.248", "1.855"], cls: "h-[61.5px] bg-[#ededed] border-t border-[#e0e0e0]" },
  { name: ["Phloem-Pole", "Pericycle (PPP)", "Initials"], vals: ["409", "0.16", "1.13", "1.72"], cls: "h-[134px] border-t border-[#e0e0e0]" },
  { name: ["Protophloem -", "SE"], vals: ["115", "0.19", "1.025", "1.67"], cls: "h-[97px] bg-[#ededed] border-t border-[#e0e0e0]" },
  { name: ["XPP inmmature"], vals: ["320", "0.21", "1.148", "1.665"], cls: "h-[60px] border-t border-[#e0e0e0]" },
];
const cols = "grid grid-cols-[246px_106px_105px_97px_144px] ";

function SummaryTable() {
  const th = "flex items-center justify-end gap-[7px] pr-[8px] text-right";
  return (
    <div className="h-[1073px] w-[688px] shrink-0 border-l border-[#ececec] text-[26px] leading-[36.5px] text-[#ababab]">
      <h3 className="h-[60px] pt-[7px] pl-[16px] font-['Noto_Sans','Open_Sans',sans-serif] text-[25.5px] whitespace-nowrap text-[#b2b2b2]">
        <span className="inline-block origin-left scale-x-[0.916]">Tissue-specific expression summary</span>
      </h3>
      <div className="flex h-[988px]">
        <div className="w-[662px] overflow-hidden pt-[15px] pl-[15px]">
          <div className="flex h-[46px] items-center font-bold text-[#a3a3a3]">
            Show
            <span className="mx-[7px] flex h-[46px] w-[77px] items-center justify-end rounded-[5px] border-2 border-[#d9d9d9] pr-[8px]">
              <Tri dir="down" color="#a0a0a0" w={9} h={9} />
            </span>
            entries
          </div>
          <div className="mt-[7px] flex h-[54px] items-center justify-end pr-[14px] font-bold text-[#a3a3a3]">
            Search:
            <span className="ml-[5px] h-[54px] w-[363px] rounded-[6px] border-2 border-[#d9d9d9]" />
          </div>
          <div className="mt-[4px] w-[698px]">
            <div className={cols + "h-[106px] border-b-2 border-[#9d9d9d] font-bold text-[#a3a3a3]"}>
              <div className="flex items-center justify-end gap-[7px] pr-[18px]">CellPopulation<Sort /></div>
              <div className={th}>Cells<Sort /></div>
              <div className={th}>Min.<Sort /></div>
              <div className={th}><span>1st<br />Qu.</span><Sort /></div>
              <div className={th}>Median<Sort /></div>
            </div>
            {rows.map((r) => (
              <div key={r.name[0]} className={cols + "items-center pb-[3px] " + r.cls}>
                <div className="pl-[14.6px]">
                  {r.name.map((n) => (
                    <div key={n}>{n}</div>
                  ))}
                </div>
                {r.vals.map((v, i) => (
                  <div key={i} className="pr-[14.6px] text-right text-[25.7px]">{v}</div>
                ))}
              </div>
            ))}
            <div className="h-[2px] bg-[#a0a0a0]" />
          </div>
          <div className="mt-[18px]">Showing 1 to 6 of 43 entries</div>
          <div className="mt-[8px] flex h-[65px] items-center">
            <span className="ml-[59px] w-[133px] text-[#bcbcbc]">Previous</span>
            <span className="flex h-[65px] w-[70px] items-center justify-center rounded-[4px] border-2 border-[#cdcdcd] bg-gradient-to-b from-[#efefef] to-[#e1e1e1]">1</span>
            {["2", "3", "4", "5"].map((n) => (
              <span key={n} className="ml-[3px] w-[70px] text-center">{n}</span>
            ))}
            <span className="ml-[3px] w-[74px] text-center">…</span>
          </div>
          <div className="flex h-[65px] items-center justify-end">
            <span>8</span>
            <span className="mr-[42px] ml-[58px]">Next</span>
          </div>
        </div>
        <div className="flex w-[25px] flex-col items-center justify-between bg-[#e9e9e9] pt-[10px] pb-[9px]">
          <Tri dir="up" color="#cdcdcd" w={11} h={7} />
          <Tri dir="down" color="#cdcdcd" w={11} h={7} />
        </div>
      </div>
      <div className="flex h-[25px]">
        <div className="flex w-[662px] items-center bg-[#e9e9e9] pl-[8px]">
          <Tri dir="left" color="#cdcdcd" w={7} h={11} />
          <div className="ml-[10px] h-[19px] w-[390px] bg-[#d8d8d8]" />
          <div className="mr-[9px] ml-auto"><Tri dir="right" color="#a9a9a9" w={7} h={11} /></div>
        </div>
        <div className="w-[25px] bg-[#e3e3e3]" />
      </div>
    </div>
  );
}

function PageScroll() {
  return (
    <div className="flex w-[24px] shrink-0 flex-col items-center bg-[#e9e9e9]">
      <div className="mt-[7px]"><Tri dir="up" color="#cdcdcd" w={11} h={7} /></div>
      <div className="mt-[8px] h-[816px] w-[20px] bg-[#d9d9d9]" />
      <div className="mt-[781px] h-[816px] w-[20px] bg-[#d9d9d9]" />
      <div className="mt-[9px]"><Tri dir="down" color="#cdcdcd" w={11} h={7} /></div>
    </div>
  );
}

function Callout() {
  const j = "whitespace-nowrap [text-align-last:justify]";
  return (
    <div className="absolute top-[355px] left-[72px] h-[750px] w-[1193px] rounded-[126px] border-[5px] border-[#bc8c00] bg-[#ffc000] pt-[40px] pr-[67px] pl-[65px] font-['Lato',sans-serif] text-[50px] leading-[66px] tracking-[0.4px] text-black [font-variant-ligatures:none]">
      <div className={j}>In the first box, you can plot the expression of</div>
      <div className={j}>an enriched gene by selecting it in <b>Select a</b></div>
      <div className="whitespace-nowrap"><b>tissue-specific gene</b> menu.</div>
      <div className={j}>To change the color of the plot, you can</div>
      <div className={j}>choose between darkblue, darkred and</div>
      <div className="whitespace-nowrap">darkgreen in <b>Select a color</b> menu.</div>
      <div className={j}>Genes that are not enriched are listed</div>
      <div className={j}>depending if they are inside the experiment</div>
      <div className={j}>gene universe (<b>Non tissue-specific genes</b>) or</div>
      <div className="whitespace-nowrap">not (<b>Non found genes</b>).</div>
    </div>
  );
}

export default function App() {
  return (
    <div className="relative h-[2480px] w-[2828px] overflow-hidden bg-[#e5e5e5] p-[5px] font-['Liberation_Sans',Arial,sans-serif]">
      <div className="h-[2470px] w-[2818px] border-r-[10px] border-b-[9px] border-l-[9px] border-[#969696]">
        <div className="flex h-[2461px] border-r border-b border-l border-[#b9cbe0] bg-[#efefef]">
          <Sidebar />
          <main className="w-[2410px] shrink-0">
            <header className="flex h-[99px] items-center border-b border-[#cfe8d8] bg-[linear-gradient(135deg,#ace1af_0%,#ace1af_10%,#98d9d3_100%)] pt-[3px] pl-[22px] text-[#efefef]">
              <FaBars className="h-[28px] w-[24px]" />
            </header>
            <div className="mt-[36px] ml-[45px] h-[111px] w-[2321px] rounded-[6px] bg-[#cae8cc] pt-[16px] text-center text-[29.2px] leading-[40.7px] text-[#a9aca9] shadow-[0_0_3px_1px_#dcdcdc]">
              <div className="pr-[8px]">Single cell expression of genes from Arabidopsis Root_SingleCell experiment</div>
              <div className="pl-[8px]">2022-11-11 16:40:33</div>
            </div>
            <div className="mt-[3px] flex">
              <CellTypePlot />
              <div className="w-[1518px] shrink-0">
                <section className="h-[1011px] bg-white px-[14px] pt-[12px]">
                  <div className="flex h-[981px] w-[1491px] rounded-[5px] border-t-[5px] border-[#00a65a] shadow-[0_2px_2px_rgba(0,0,0,0.07)]">
                    <ExpressionPlot />
                    <Controls />
                  </div>
                </section>
                <section className="mt-[9px] ml-[14px] flex h-[1141px] w-[1491px] rounded-[5px] border-t-[5px] border-[#98d0b8] shadow-[0_1px_1px_rgba(0,0,0,0.05)]">
                  <div className="pt-[19px] pl-[36px]">
                    <SummaryTable />
                  </div>
                  <CompanionPlot />
                </section>
              </div>
            </div>
          </main>
          <PageScroll />
        </div>
      </div>
      <Callout />
    </div>
  );
}
